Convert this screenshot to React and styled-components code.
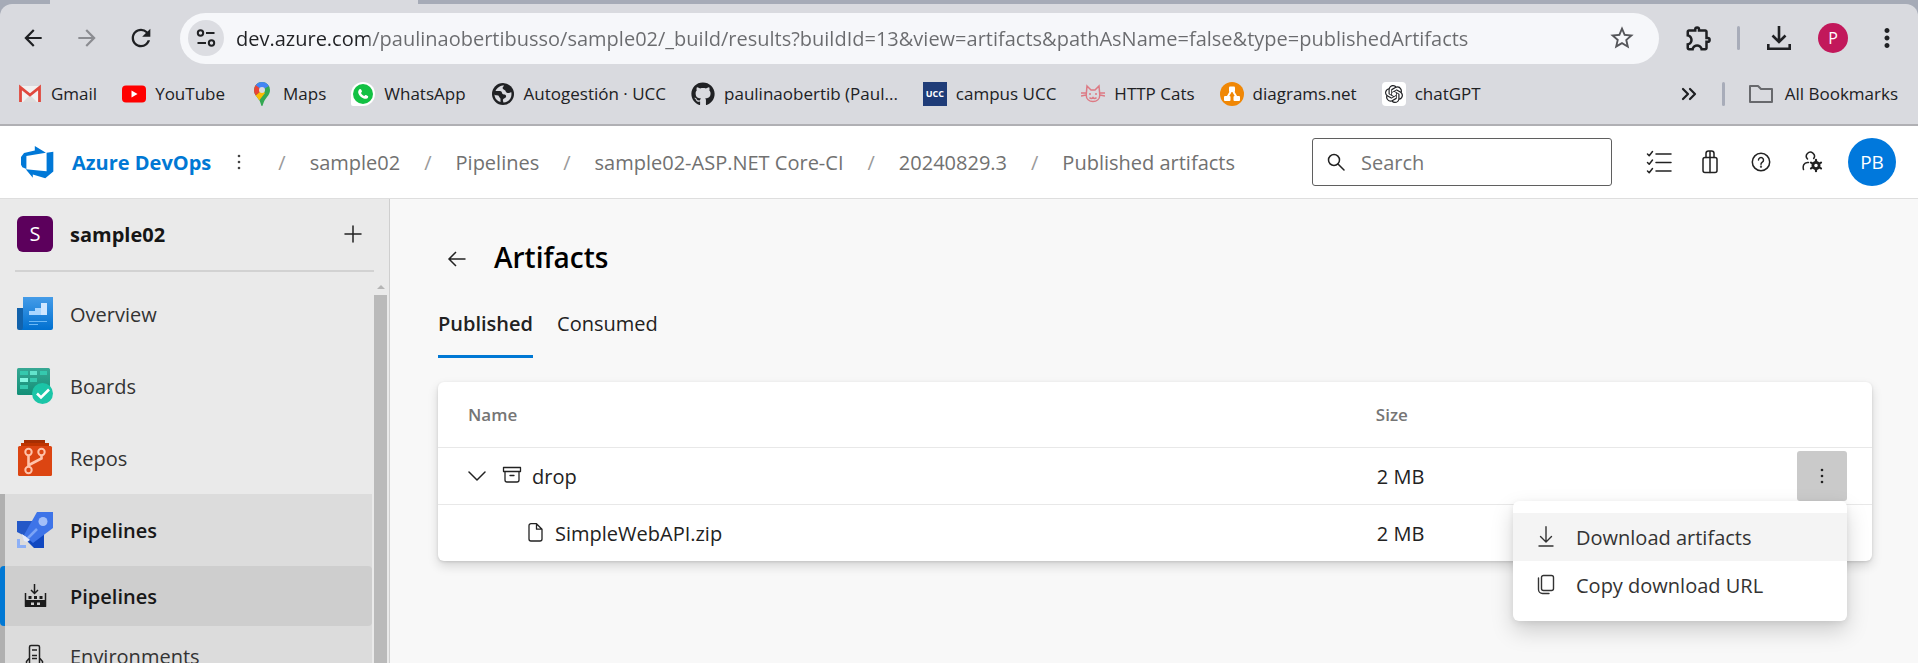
import React from "react";
import styled, { createGlobalStyle, css } from "styled-components";
import { FaGithub, FaWhatsapp } from "react-icons/fa";
import { SiOpenai } from "react-icons/si";
import { MdArrowBack, MdArrowForward, MdRefresh, MdStarBorder, MdOutlineExtension, MdMoreVert } from "react-icons/md";

const Global = createGlobalStyle`
  *, *::before, *::after { box-sizing: border-box; }
  body {
    margin: 0;
    background: #f8f8f8;
    color: #222;
    font-family: "Segoe UI", "Open Sans", "Noto Sans", sans-serif;
    font-size: 20px;
    line-height: 28px;
  }
  button, input { font: inherit; color: inherit; }
  a { color: inherit; text-decoration: none; }
  svg { display: block; flex: none; }
`;

const Page = styled.div`
  display: flex;
  flex-direction: column;
  height: 100vh;
  overflow: hidden;
`;

/* Text beside an icon, set slightly below the icon's centre line */
const Label = styled.span`
  padding-top: 2px;
`;

/* ---------- browser chrome ---------- */

const Chrome = styled.header`
  flex: none;
  background: #a6abb7;
`;

const TabStrip = styled.div`
  height: 4px;
  padding-left: 50px;
`;

const ActiveTab = styled.div`
  width: 368px;
  height: 4px;
  background: #d9dadf;
`;

const ChromeBody = styled.div`
  background: #d9dadf;
  border-radius: 12px 12px 0 0;
  border-bottom: 2px solid #b0b0b4;
`;

const Toolbar = styled.div`
  display: flex;
  align-items: center;
  height: 68px;
  padding: 0 16px 0 18px;
`;

const ChromeButton = styled.button`
  display: grid;
  place-items: center;
  flex: none;
  width: ${(p) => p.$width || 30}px;
  height: 30px;
  margin: 0 ${(p) => p.$gap || 0}px 0 0;
  padding: 0;
  border: 0;
  background: none;
  color: ${(p) => p.$color || "#1f2023"};
`;

const DownloadsButton = styled(ChromeButton)`
  margin-left: 26px;
`;

const AddressBar = styled.div`
  flex: 1;
  display: flex;
  align-items: center;
  height: 51px;
  margin: 0 22px 0 0;
  padding: 0 22px 0 8px;
  border-radius: 26px;
  background: #f6f7fa;
`;

const SiteInfo = styled.button`
  display: grid;
  place-items: center;
  flex: none;
  width: 36px;
  height: 36px;
  margin: 0 12px 0 0;
  padding: 0;
  border: 0;
  border-radius: 50%;
  background: #dcdde2;
`;

const UrlInput = styled.input`
  flex: 1;
  min-width: 0;
  height: 36px;
  padding: 0;
  border: 0;
  outline: 0;
  font-size: 20px;
  color: #6a6b6e;
  background: linear-gradient(to right, #202124 133px, #6a6b6e 133px);
  background-clip: text;
  -webkit-background-clip: text;
  -webkit-text-fill-color: transparent;
`;

const ChromeDivider = styled.span`
  flex: none;
  width: 3px;
  height: 24px;
  border-radius: 2px;
  background: #a8acb9;
`;

const ProfileButton = styled.button`
  flex: none;
  width: 30px;
  height: 30px;
  margin: 0 24px 0 26px;
  padding: 0;
  border: 0;
  border-radius: 50%;
  background: #c2185b;
  color: #fff;
  font-size: 16px;
  line-height: 30px;
`;

const Bookmarks = styled.nav`
  display: flex;
  align-items: center;
  height: 52px;
  padding: 0 20px 8px 18px;
`;

const BookmarkList = styled.div`
  flex: 1;
  display: flex;
  gap: 25px;
`;

const Bookmark = styled.a`
  display: flex;
  align-items: center;
  gap: 9px;
  font-size: 17px;
  line-height: 24px;
  white-space: nowrap;
  color: #202124;
`;

const AllBookmarks = styled(Bookmark)`
  gap: 12px;
  margin-left: 24px;
`;

/* ---------- Azure header ---------- */

const TopBar = styled.div`
  flex: none;
  display: flex;
  align-items: center;
  height: 73px;
  padding: 0 22px 0 20px;
  background: #fff;
  border-bottom: 1px solid #dedede;
`;

const Brand = styled.a`
  display: flex;
  align-items: center;
  gap: 18px;
  margin-right: 22px;
  font-weight: 700;
  color: #0078d4;
  white-space: nowrap;
`;

const Crumbs = styled.ol`
  display: flex;
  flex: 1;
  margin: 0 0 0 33px;
  padding: 2px 0 0;
  list-style: none;
  white-space: nowrap;
  color: #717171;
`;

const Crumb = styled.li`
  display: flex;
  gap: 24px;
  margin-right: 24px;
  &::before { content: "/"; color: #9a9a9a; }
`;

const SearchBox = styled.label`
  display: flex;
  align-items: center;
  gap: 16px;
  flex: none;
  width: 300px;
  height: 48px;
  padding: 0 14px;
  border: 1px solid #5f5f5f;
  border-radius: 3px;
  background: #fff;
`;

const SearchInput = styled.input`
  flex: 1;
  min-width: 0;
  padding: 2px 0 0;
  border: 0;
  outline: 0;
  background: none;
  &::placeholder { color: #757575; opacity: 1; }
`;

const HeaderIcons = styled.div`
  display: flex;
  align-items: center;
  gap: 23px;
  margin: 0 22px 0 33px;
`;

const IconButton = styled.button`
  display: grid;
  place-items: center;
  flex: none;
  width: 28px;
  height: 28px;
  padding: 0;
  border: 0;
  background: none;
  color: #222;
`;

const DotsButton = styled(IconButton)`
  width: 12px;
  color: #444;
`;

const UserAvatar = styled.button`
  flex: none;
  width: 48px;
  height: 48px;
  padding: 0;
  border: 0;
  border-radius: 50%;
  background: #0078dc;
  color: #fff;
  font-size: 19px;
`;

/* ---------- sidebar ---------- */

const Body = styled.div`
  display: flex;
  flex: 1;
  min-height: 0;
`;

const Sidebar = styled.aside`
  display: flex;
  flex-direction: column;
  flex: none;
  width: 390px;
  background: #eaeaea;
  border-right: 1px solid #cfcfcf;
`;

const Project = styled.div`
  display: flex;
  align-items: center;
  flex: none;
  height: 73px;
  margin: 0 15px;
  padding: 0 7px 2px 2px;
  border-bottom: 2px solid #d2d2d2;
`;

const ProjectBadge = styled.span`
  width: 36px;
  height: 36px;
  border-radius: 6px;
  background: #5c005c;
  color: #fff;
  text-align: center;
  line-height: 36px;
`;

const ProjectName = styled.a`
  flex: 1;
  margin-left: 17px;
  padding-top: 2px;
  font-weight: 700;
  color: #161616;
`;

const NavArea = styled.div`
  display: flex;
  flex: 1;
  min-height: 0;
`;

const NavScroll = styled.nav`
  flex: 1;
  padding-top: 6px;
  overflow: hidden;
`;

const itemLayout = css`
  display: flex;
  align-items: center;
  gap: 17px;
  color: ${(p) => (p.$active ? "#181818" : "#333")};
  font-weight: ${(p) => (p.$active ? 600 : 400)};
`;

const NavItem = styled.a`
  ${itemLayout}
  height: 72px;
  padding-left: 17px;
`;

const NavGroup = styled.div`
  margin-right: 2px;
  background: #dcdcdc;
  box-shadow: inset 5px 0 #b0b0b0;
`;

const SubItem = styled.a`
  ${itemLayout}
  height: 60px;
  padding-left: ${(p) => (p.$active ? 12 : 17)}px;
  ${(p) => p.$active && css`
    border-left: 5px solid #0078d4;
    border-radius: 4px;
    background: #cecece;
  `}
`;

const ScrollBar = styled.div`
  display: flex;
  flex-direction: column;
  align-items: center;
  width: 15px;
  padding: 13px 2px 0 0;
`;

const ScrollArrow = styled.span`
  border: 4px solid transparent;
  border-top: 0;
  border-bottom-color: #b5b5b5;
  margin-bottom: 6px;
`;

const ScrollThumb = styled.span`
  flex: 1;
  width: 13px;
  background: #bababa;
`;

/* ---------- content ---------- */

const Main = styled.main`
  flex: 1;
  min-width: 0;
  padding: 36px 46px 0 48px;
`;

const TitleRow = styled.div`
  display: flex;
  align-items: center;
  gap: 23px;
  padding-left: 5px;
`;

const BackButton = styled(IconButton)`
  height: 32px;
  padding-top: 4px;
`;

const Title = styled.h1`
  margin: 0;
  font-size: 28px;
  line-height: 44px;
  font-weight: 600;
  color: #000;
`;

const Tabs = styled.div`
  display: flex;
  gap: 24px;
  margin: 12px 0 24px;
`;

const Tab = styled.button`
  height: 67px;
  padding: 1px 0 0;
  border: 0;
  border-bottom: 3px solid ${(p) => (p.$active ? "#0078d4" : "transparent")};
  background: none;
  font-weight: ${(p) => (p.$active ? 600 : 400)};
  color: #222;
`;

const Card = styled.section`
  border-radius: 6px;
  background: #fff;
  box-shadow: 0 5px 11px rgba(0, 0, 0, 0.14), 0 1px 3px rgba(0, 0, 0, 0.12);
`;

const Table = styled.table`
  width: 100%;
  table-layout: fixed;
  border-collapse: collapse;
`;

const HeadCell = styled.th`
  width: ${(p) => p.$width || "auto"};
  height: 65px;
  padding: 2px 0 0 ${(p) => p.$indent || 0}px;
  text-align: left;
  font-size: 17px;
  font-weight: 600;
  color: #757575;
`;

const Row = styled.tr`
  border-top: 1px solid #e8e8e8;
`;

const Cell = styled.td`
  height: 57px;
  padding: 0 0 0 ${(p) => p.$indent || 0}px;
`;

const SizeCell = styled.td`
  padding: 2px 0 0 1px;
`;

const NameLine = styled.div`
  display: flex;
  align-items: center;
  gap: ${(p) => p.$gap}px;
`;

const Expander = styled(IconButton)`
  width: 18px;
  margin-right: 6px;
`;

const ActionCell = styled.td`
  padding: 0 25px 0 0;
`;

const MenuAnchor = styled.div`
  position: relative;
  width: 50px;
  margin-left: auto;
`;

const MoreButton = styled(IconButton)`
  width: 50px;
  height: 50px;
  border-radius: 3px;
  background: #cacaca;
`;

const Menu = styled.div`
  position: absolute;
  z-index: 1;
  top: 50px;
  right: 0;
  width: 334px;
  padding: 12px 0;
  border-radius: 6px;
  background: #fff;
  box-shadow: 0 10px 22px rgba(0, 0, 0, 0.17), 0 2px 6px rgba(0, 0, 0, 0.08);
`;

const MenuItem = styled.button`
  display: flex;
  align-items: center;
  gap: 19px;
  width: 100%;
  height: 48px;
  padding: 0 22px;
  border: 0;
  background: ${(p) => (p.$hover ? "#f4f4f4" : "#fff")};
  color: #333;
`;

/* ---------- drawings ---------- */

const Line = ({ size = 24, box = 24, w = 1.5, children }) => (
  <svg width={size} height={size} viewBox={`0 0 ${box} ${box}`} fill="none" stroke="currentColor" strokeWidth={w} strokeLinecap="round" strokeLinejoin="round" aria-hidden="true">
    {children}
  </svg>
);

const Dots = ({ r = 1.3, gap = 6 }) => (
  <svg width="12" height="24" viewBox="0 0 12 24" fill="currentColor" aria-hidden="true">
    <circle cx="6" cy={12 - gap} r={r} /><circle cx="6" cy="12" r={r} /><circle cx="6" cy={12 + gap} r={r} />
  </svg>
);

const TuneIcon = () => (
  <svg width="20" height="20" viewBox="0 0 20 20" fill="none" stroke="#202124" strokeWidth="2" aria-hidden="true">
    <circle cx="4.5" cy="5" r="2.7" /><path d="M10 5h8.500M1.500 15h8.500" /><circle cx="15.500" cy="15" r="2.700" />
  </svg>
);

const DownloadTray = () => (
  <svg width="26" height="26" viewBox="0 0 26 26" fill="none" stroke="#202124" strokeWidth="2.6" aria-hidden="true">
    <path d="M13 1v15M6.500 10.500l6.500 6.500l6.500-6.500M2.300 19v4.700h21.400V19" />
  </svg>
);

const GmailIcon = () => (
  <svg width="24" height="24" viewBox="0 0 24 24" aria-hidden="true">
    <path d="M2 4h20v16H2z" fill="#f1f1f1" /><path d="M5 20l7-7 7 7z" fill="#ddd" />
    <path d="M2.500 20V5.500L12 13l9.500-7.500V20" fill="none" stroke="#e0483d" strokeWidth="2.800" />
  </svg>
);

const YoutubeIcon = () => (
  <svg width="24" height="24" viewBox="0 0 24 24" aria-hidden="true">
    <rect y="3.500" width="24" height="17" rx="4" fill="#f00" /><path d="M9.500 8.500v7l6-3.500z" fill="#fff" />
  </svg>
);

const MapsIcon = () => (
  <svg width="24" height="24" viewBox="0 0 24 24" aria-hidden="true">
    <defs><clipPath id="pin"><path d="M12 0a8 8 0 0 0-8 8c0 4.500 3 6.500 5.300 10.200C10.800 20.700 11 24 12 24s1.200-3.300 2.700-5.800C17 14.500 20 12.500 20 8a8 8 0 0 0-8-8z" /></clipPath></defs>
    <g clipPath="url(#pin)">
      <path d="M0 0h24v24H0z" fill="#34a853" />
      <path d="M0 18l12-10 3 3-7 9z" fill="#fbbc04" />
      <path d="M0 0h6l6 8-8 7H0z" fill="#ea4335" />
      <path d="M5.500 3L9-2h12l-2 6-7 4z" fill="#4285f4" />
    </g>
    <circle cx="12" cy="8" r="3" fill="#d9dadf" />
  </svg>
);

const WhatsappBox = styled.span`
  display: grid;
  place-items: center;
  width: 24px;
  height: 24px;
  border-radius: 12px 12px 12px 2px;
  background: #fff;
  color: #fff;
`;

const WhatsappDisc = styled.span`
  display: grid;
  place-items: center;
  width: 20px;
  height: 20px;
  border-radius: 50%;
  background: #12c143;
`;

const PhoneIcon = () => (
  <svg width="20" height="20" viewBox="0 0 20 20" fill="#fff" aria-hidden="true">
    <path d="M6.500 5.200c.5-.5 1.300-.4 1.600.2l.8 1.700c.2.500 0 .9-.9 1.900.7 1.500 1.700 2.400 3.300 3.100.8-1.100 1.200-1.300 1.700-1l1.800.9c.5.300.5.800.2 1.400-.8 1.500-2.400 1.800-4.300 1.100-2.800-1-4.700-3-5.400-5.500-.4-1.400.2-2.900 1.200-3.800z" />
  </svg>
);

const GlobeIcon = () => (
  <svg width="24" height="24" viewBox="0 0 24 24" aria-hidden="true">
    <circle cx="12" cy="12" r="11" fill="#202124" />
    <path d="M13 3.500c-3.500 0-7 2-8.500 5.500h4.500c2.500 0 1.500 3.500 4 3.500 1.500 0 2.500 1 2 2.500-.5 1.500-2.500 1-3 2.500-.3 1 0 2 .5 3 4.500 0 8-3.500 8-8.500 0-.7-.1-1.400-.3-2-1.200 1.200-3.200 1.500-4.700.5-1-.7-.5-2-2-2.500-1.500-.6-2.500-1.500-1.500-3 .4-.6 1-.8 1-1.500z" fill="#d9dadf" />
    <path d="M3.500 12.500c1.500 1.500 4 0 4.500 2 .3 1.200 1.500 1 1.500 2.500V20c-3.500-1-6-4-6-7.500z" fill="#d9dadf" />
  </svg>
);

const UccBadge = styled.span`
  width: 24px;
  height: 24px;
  background: #1f3c78;
  color: #fff;
  font-size: 9px;
  font-weight: 700;
  text-align: center;
  line-height: 24px;
`;

const CatIcon = () => (
  <svg width="24" height="24" viewBox="0 0 24 24" fill="none" stroke="#dd7a84" strokeWidth="1.500" aria-hidden="true">
    <path d="M6 4l4 4h4l4-4 .8 9c0 4-3 6.500-6.800 6.500S5.200 17 5.200 13zM0 11h5M0 14l5-1M24 11h-5M24 14l-5-1M8 12h2M14 12h2M8.500 15.500q1.800 2 3.500 0 1.700 2 3.500 0" />
  </svg>
);

const DiagramsIcon = () => (
  <svg width="24" height="24" viewBox="0 0 24 24" aria-hidden="true">
    <circle cx="12" cy="12" r="12" fill="#f08705" />
    <path d="M11 9l-4 7M13 9l4 7" stroke="#fff" strokeWidth="2" />
    <g fill="#fff"><rect x="9" y="4.500" width="6" height="5.500" rx="1" /><rect x="4" y="14" width="6.500" height="5" rx="1" /><rect x="13.500" y="14" width="6.500" height="5" rx="1" /></g>
  </svg>
);

const GptBox = styled.span`
  display: grid;
  place-items: center;
  width: 24px;
  height: 24px;
  border-radius: 4px;
  background: #fff;
`;

const FolderIcon = () => (
  <svg width="24" height="24" viewBox="0 0 24 24" fill="none" stroke="#68696d" strokeWidth="2" strokeLinejoin="round" aria-hidden="true">
    <path d="M1 4h8l3 3h11v13H1z" />
  </svg>
);

const AzureLogo = () => (
  <svg width="34" height="34" viewBox="59 75 101 101" fill="#0078d7" aria-hidden="true">
    <path d="M103 78l33 20-58 10v38l-12-5-4-7v-23l9-12 32-8z" />
    <path d="M138 98l20-3v59l-24 20-37-11v9l-21-25 62 6z" />
  </svg>
);

const ChecklistIcon = () => (
  <Line size={26} box={26}>
    <path d="M10 5h15M10 13.500h15M10 22h15" /><path d="M1.500 5l1.700 1.700L6.500 2.500M1.500 13.500l1.700 1.700L6.500 11M1.500 22l1.700 1.700 3.300-4.200" />
  </Line>
);

const BagIcon = () => (
  <Line size={26} box={26}>
    <rect x="6" y="8.500" width="14" height="15" rx="2" /><path d="M9 8.500V4.500A2.500 2.500 0 0 1 11.500 2h3A2.500 2.500 0 0 1 17 4.500v4M13 2v21.500" />
  </Line>
);

const HelpIcon = () => (
  <Line size={20} box={20}>
    <circle cx="10" cy="10" r="8.700" /><path d="M7.500 8a2.500 2.500 0 1 1 3.800 2.200c-.9.600-1.300 1-1.300 2" /><circle cx="10" cy="14.700" r=".4" />
  </Line>
);

const UserSettingsIcon = () => (
  <Line size={24} box={24} w={1.5}>
    <path d="M7.500 9a4 4 0 1 1 6.200-.5M3.500 19.500c-1-3.500.5-7 4-7h1" />
    <circle cx="16" cy="15.500" r="3" strokeWidth="3" />
    <path d="M16 9.800v11.400M11 12.600l10 5.800M11 18.400l10-5.800" strokeWidth="2.200" /><circle cx="16" cy="15.500" r="1" fill="#fff" stroke="#fff" />
  </Line>
);

const OverviewIcon = () => (
  <svg width="36" height="36" viewBox="0 0 36 36" aria-hidden="true">
    <defs><linearGradient id="ov" x1="0" y1="0" x2="0" y2="1"><stop offset="0" stopColor="#459ce8" /><stop offset="1" stopColor="#0070d0" /></linearGradient></defs>
    <path d="M0 12h8v22H2a2 2 0 0 1-2-2z" fill="#1262ab" />
    <path d="M6 1h30v31a2 2 0 0 1-2 2H4.500A3 3 0 0 0 6 31z" fill="url(#ov)" />
    <path d="M12 15h6v-3h6V7h6v12H12z" fill="#a9d6ff" /><path d="M24 7h6v12h-6z" fill="#cfe7ff" />
    <path d="M12 25.500h18M12 28.500h9" stroke="#6ab8f7" />
  </svg>
);

const BoardsIcon = () => (
  <svg width="36" height="36" viewBox="0 0 36 36" aria-hidden="true">
    <defs><linearGradient id="bd" x1="0" y1="0" x2="0" y2="1"><stop offset="0" stopColor="#37a894" /><stop offset="1" stopColor="#128f77" /></linearGradient></defs>
    <rect width="33" height="27" rx="1.500" fill="url(#bd)" />
    <g fill="#35c9ae"><path d="M3 3h8v4H3zM23 3h7v4h-7zM13 10h7v4h-7zM3 17h8v4H3z" /></g>
    <path d="M13 3h7v4h-7z" fill="#62e3cb" /><path d="M3 10h8v4H3z" fill="#86f8e2" />
    <circle cx="25.500" cy="25.500" r="10.500" fill="#1bc5a7" /><path d="M20 25.500l4 4 8-8" fill="none" stroke="#fff" strokeWidth="2.600" />
  </svg>
);

const ReposIcon = () => (
  <svg width="36" height="36" viewBox="0 0 36 36" aria-hidden="true">
    <path d="M7 0h21v4H7z" fill="#a62e03" /><path d="M4 3h28v5H4z" fill="#bf3400" />
    <rect x="1" y="6" width="34" height="30" rx="1.500" fill="#dc4512" />
    <g fill="none" stroke="#ffc3ab" strokeWidth="2"><circle cx="11.500" cy="12" r="3.200" /><circle cx="24.500" cy="12" r="3.200" /><circle cx="11.500" cy="30" r="3.200" /><path d="M11.500 15.500v11M24.500 15.500v3L12 25" strokeWidth="2.600" /></g>
  </svg>
);

const PipelinesIcon = () => (
  <svg width="36" height="36" viewBox="0 0 36 36" aria-hidden="true">
    <path d="M0 9h16L8 24l-8-4z" fill="#2458c7" /><path d="M27 20v16H17l-7-7z" fill="#1148c0" />
    <path d="M20 0h16v16L16 31 7 23z" fill="#3e74e8" />
    <path d="M10 27l10-10" stroke="#7ba4f6" strokeWidth="2.500" /><circle cx="26" cy="9.500" r="4.500" fill="#a3bff8" />
    <path d="M5 22l8 6-3 2-3-1z" fill="#e3eafb" /><path d="M0 27h3v6h6v3H0z" fill="#8db0f6" />
  </svg>
);

const BuildIcon = () => (
  <svg width="36" height="24" viewBox="0 0 36 24" aria-hidden="true">
    <path d="M17.500 0v9M14 6l3.500 3.500L21 6M8.500 9v13h20V9" fill="none" stroke="#1c1c1c" strokeWidth="1.500" />
    <path d="M8 16h21v7H8zM11.500 12h3v3h-3zM17 12h3v3h-3zM22.500 12h3v3h-3z" fill="#1c1c1c" />
    <path d="M14 18.500h3v2.500h-3zM20 18.500h3v2.500h-3z" fill="#cecece" />
  </svg>
);

const EnvironmentIcon = () => (
  <svg width="36" height="24" viewBox="0 0 36 24" fill="none" stroke="#222" strokeWidth="1.500" aria-hidden="true">
    <path d="M12.500 20V3a1.500 1.500 0 0 1 1.500-1.500h7A1.500 1.500 0 0 1 22.500 3v17M15 6h5M15 11.500h5M15 14.500h5M12 14.500l-2.500 3V23h16v-5.500l-2.500-3" />
  </svg>
);

const ArrowLeft = () => <Line size={20} box={20}><path d="M18.500 10H2M9 3l-7 7 7 7" strokeLinecap="butt" strokeLinejoin="miter" /></Line>;
const ChevronIcon = () => <Line size={18} box={18}><path d="M1 5l8 8 8-8" /></Line>;
const ArchiveIcon = () => <Line size={20} box={20} w={1.3}><path d="M1.500 1.500h17v4h-17zM3 5.500v8.500a2 2 0 0 0 2 2h10a2 2 0 0 0 2-2V5.500M8 9.500h4" /></Line>;
const FileIcon = () => <Line size={20} box={20} w={1.3}><path d="M5 .7h5.500L16 6.200V16a2 2 0 0 1-2 2H5a2 2 0 0 1-2-2V2.700a2 2 0 0 1 2-2zM10.500 .7v5.500H16" /></Line>;
const DownloadIcon = () => <Line size={22} box={22} w={1.4}><path d="M11 0.700v15M5.500 10.500L11 16l5.500-5.500M4 20h14" /></Line>;
const CopyIcon = () => <Line size={22} box={22} w={1.4}><rect x="6.500" y="1.500" width="12" height="15" rx="2" /><path d="M3.500 4v11.500a4 4 0 0 0 4 4H14" /></Line>;

const bookmarks = [
  ["Gmail", <GmailIcon />],
  ["YouTube", <YoutubeIcon />],
  ["Maps", <MapsIcon />],
  ["WhatsApp", <WhatsappBox><WhatsappDisc><PhoneIcon /></WhatsappDisc></WhatsappBox>],
  ["Autogestión · UCC", <GlobeIcon />],
  ["paulinaobertib (Paul...", <FaGithub size={24} />],
  ["campus UCC", <UccBadge>UCC</UccBadge>],
  ["HTTP Cats", <CatIcon />],
  ["diagrams.net", <DiagramsIcon />],
  ["chatGPT", <GptBox><SiOpenai size={18} /></GptBox>],
];

const crumbs = ["sample02", "Pipelines", "sample02-ASP.NET Core-CI", "20240829.3", "Published artifacts"];

export default function App() {
  return (
    <Page>
      <Global />
      <Chrome>
        <TabStrip><ActiveTab /></TabStrip>
        <ChromeBody>
          <Toolbar>
            <ChromeButton $gap={24} aria-label="Back"><MdArrowBack size={26} /></ChromeButton>
            <ChromeButton $gap={24} $color="#8b8c91" aria-label="Forward"><MdArrowForward size={26} /></ChromeButton>
            <ChromeButton $gap={24} aria-label="Reload"><MdRefresh size={28} /></ChromeButton>
            <AddressBar>
              <SiteInfo aria-label="Site information"><TuneIcon /></SiteInfo>
              <UrlInput aria-label="Address" defaultValue="dev.azure.com/paulinaobertibusso/sample02/_build/results?buildId=13&view=artifacts&pathAsName=false&type=publishedArtifacts" />
              <ChromeButton $color="#55565a" aria-label="Bookmark this page"><MdStarBorder size={28} /></ChromeButton>
            </AddressBar>
            <ChromeButton $width={36} $gap={20} aria-label="Extensions"><MdOutlineExtension size={30} /></ChromeButton>
            <ChromeDivider />
            <DownloadsButton $width={26} aria-label="Downloads"><DownloadTray /></DownloadsButton>
            <ProfileButton>P</ProfileButton>
            <ChromeButton aria-label="Browser menu"><MdMoreVert size={30} /></ChromeButton>
          </Toolbar>
          <Bookmarks aria-label="Bookmarks">
            <BookmarkList>
              {bookmarks.map(([name, icon]) => (
                <Bookmark href="#" key={name}>{icon}{name}</Bookmark>
              ))}
            </BookmarkList>
            <ChromeButton $width={18} $gap={24} aria-label="More bookmarks">
              <Line size={16} box={16} w={2.2}><path d="M2 3l5 5-5 5M9 3l5 5-5 5" /></Line>
            </ChromeButton>
            <ChromeDivider />
            <AllBookmarks href="#"><FolderIcon />All Bookmarks</AllBookmarks>
          </Bookmarks>
        </ChromeBody>
      </Chrome>

      <TopBar>
        <Brand href="#"><AzureLogo /><Label>Azure DevOps</Label></Brand>
        <DotsButton aria-label="More"><Dots /></DotsButton>
        <Crumbs>
          {crumbs.map((c) => <Crumb key={c}><a href="#">{c}</a></Crumb>)}
        </Crumbs>
        <SearchBox>
          <Line size={18} box={18}><circle cx="7" cy="7" r="5.500" /><path d="M11 11l6 6" /></Line>
          <SearchInput placeholder="Search" aria-label="Search" />
        </SearchBox>
        <HeaderIcons>
          <IconButton aria-label="Work items"><ChecklistIcon /></IconButton>
          <IconButton aria-label="Marketplace"><BagIcon /></IconButton>
          <IconButton aria-label="Help"><HelpIcon /></IconButton>
          <IconButton aria-label="User settings"><UserSettingsIcon /></IconButton>
        </HeaderIcons>
        <UserAvatar>PB</UserAvatar>
      </TopBar>

      <Body>
        <Sidebar>
          <Project>
            <ProjectBadge>S</ProjectBadge>
            <ProjectName href="#">sample02</ProjectName>
            <IconButton aria-label="Add"><Line size={18} box={18}><path d="M9 1v16M1 9h16" /></Line></IconButton>
          </Project>
          <NavArea>
            <NavScroll aria-label="Project">
              <NavItem href="#"><OverviewIcon /><Label>Overview</Label></NavItem>
              <NavItem href="#"><BoardsIcon /><Label>Boards</Label></NavItem>
              <NavItem href="#"><ReposIcon /><Label>Repos</Label></NavItem>
              <NavGroup>
                <NavItem href="#" $active><PipelinesIcon /><Label>Pipelines</Label></NavItem>
                <SubItem href="#" $active><BuildIcon /><Label>Pipelines</Label></SubItem>
                <SubItem href="#"><EnvironmentIcon /><Label>Environments</Label></SubItem>
              </NavGroup>
            </NavScroll>
            <ScrollBar aria-hidden="true"><ScrollArrow /><ScrollThumb /></ScrollBar>
          </NavArea>
        </Sidebar>

        <Main>
          <TitleRow>
            <BackButton aria-label="Go back"><ArrowLeft /></BackButton>
            <Title>Artifacts</Title>
          </TitleRow>
          <Tabs role="tablist">
            <Tab role="tab" aria-selected="true" $active>Published</Tab>
            <Tab role="tab" aria-selected="false">Consumed</Tab>
          </Tabs>
          <Card>
            <Table>
              <thead>
                <tr>
                  <HeadCell $width="65.4%" $indent={30}>Name</HeadCell>
                  <HeadCell>Size</HeadCell>
                  <HeadCell aria-label="Actions" />
                </tr>
              </thead>
              <tbody>
                <Row>
                  <Cell $indent={30}>
                    <NameLine $gap={10}>
                      <Expander aria-label="Collapse drop"><ChevronIcon /></Expander>
                      <ArchiveIcon /><Label>drop</Label>
                    </NameLine>
                  </Cell>
                  <SizeCell>2 MB</SizeCell>
                  <ActionCell>
                    <MenuAnchor>
                      <MoreButton aria-label="More options" aria-expanded="true"><Dots /></MoreButton>
                      <Menu role="menu">
                        <MenuItem role="menuitem" $hover><DownloadIcon /><Label>Download artifacts</Label></MenuItem>
                        <MenuItem role="menuitem"><CopyIcon /><Label>Copy download URL</Label></MenuItem>
                      </Menu>
                    </MenuAnchor>
                  </ActionCell>
                </Row>
                <Row>
                  <Cell $indent={88}>
                    <NameLine $gap={9}><FileIcon /><Label>SimpleWebAPI.zip</Label></NameLine>
                  </Cell>
                  <SizeCell>2 MB</SizeCell>
                  <td />
                </Row>
              </tbody>
            </Table>
          </Card>
        </Main>
      </Body>
    </Page>
  );
}
